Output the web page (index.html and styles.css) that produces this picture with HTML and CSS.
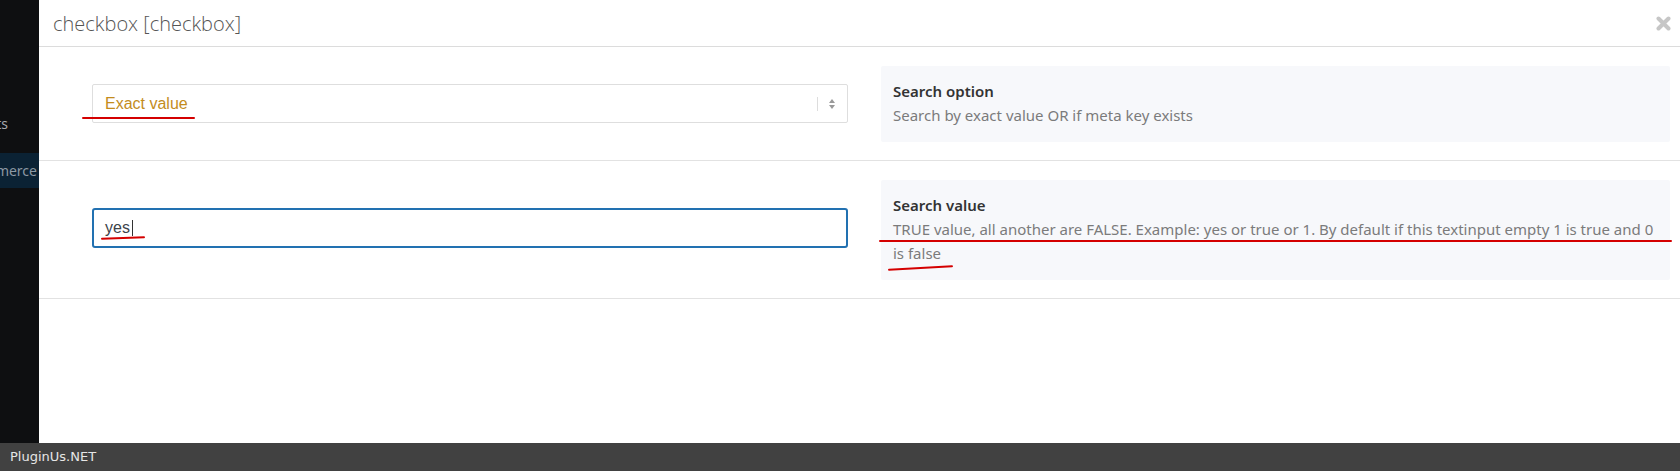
FILE: index.html
```html
<!DOCTYPE html>
<html lang="en">
<head>
    <meta charset="UTF-8">
    <title>checkbox [checkbox]</title>
    <link rel="stylesheet" href="styles.css">
</head>
<body>
    <div class="screen">
        <div class="sidebar">
            <div class="menu-item products"><span>Products</span></div>
            <div class="menu-item current"><span>WooCommerce</span></div>
        </div>

        <div class="modal">
            <div class="modal-header">
                <div class="modal-title">checkbox [checkbox]</div>
                <svg class="close" width="15" height="15" viewBox="0 0 15 15">
                    <path d="M2.5 2.5 L12.5 12.5 M12.5 2.5 L2.5 12.5" stroke="#c6c6c6" stroke-width="4" stroke-linecap="round"/>
                </svg>
            </div>

            <div class="row">
                <div class="field">
                    <div class="select">
                        <span class="select-value">Exact value</span>
                        <span class="select-sep"></span>
                        <svg class="select-arrows" width="6" height="10" viewBox="0 0 6 10">
                            <path d="M3 0 L6 4 L0 4 Z M0 6 L6 6 L3 10 Z" fill="#999"/>
                        </svg>
                    </div>
                    <span class="mark mark-select"></span>
                </div>
                <div class="desc">
                    <div class="desc-title">Search option</div>
                    <div class="desc-text">Search by exact value OR if meta key exists</div>
                </div>
            </div>

            <div class="row">
                <div class="field field-text">
                    <div class="text-input">yes<span class="caret"></span></div>
                    <span class="mark mark-yes"></span>
                </div>
                <div class="desc">
                    <div class="desc-title">Search value</div>
                    <div class="desc-text">TRUE value, all another are FALSE. Example: yes or true or 1. By default if this textinput empty 1 is true and 0 is false</div>
                    <span class="mark mark-line"></span>
                    <span class="mark mark-false"></span>
                </div>
            </div>
        </div>
    </div>

    <div class="footer">PluginUs.NET</div>
</body>
</html>
```

FILE: styles.css
```css
body {
    margin: 0;
    background-color: #fff;
    font-family: "Noto Sans", sans-serif;
    overflow: hidden;
}

.screen {
    display: flex;
    height: 443px;
}

.sidebar {
    width: 39px;
    flex-shrink: 0;
    background-color: #0e0f11;
    padding-top: 108px;
    box-sizing: border-box;
    overflow: hidden;
}

.menu-item {
    display: flex;
    justify-content: flex-end;
    align-items: center;
    height: 35px;
    white-space: nowrap;
    font-size: 14px;
    color: #a7aaad;
    overflow: hidden;
}

.menu-item.products {
    padding-right: 31px;
    height: 30px;
    margin-bottom: 15px;
}

.menu-item.current {
    background-color: #0b2234;
    color: #8c98a3;
    padding-right: 2px;
}

.modal {
    flex: 1;
    display: flex;
    flex-direction: column;
}

.modal-header {
    display: flex;
    align-items: center;
    justify-content: space-between;
    height: 46px;
    padding: 0 9px 0 14px;
    border-bottom: 1px solid #dcdcdc;
}

.modal-title {
    font-family: "Open Sans", sans-serif;
    font-weight: 300;
    font-size: 20px;
    color: #555;
}

.close {
    margin-top: 1px;
}

.row {
    display: flex;
    align-items: center;
    gap: 33px;
    padding: 19px 10px 18px 53px;
    border-bottom: 1px solid #e2e2e2;
}

.field {
    position: relative;
    width: 756px;
    flex-shrink: 0;
    margin-bottom: 1px;
}

.field-text {
    margin-bottom: 5px;
}

.select {
    display: flex;
    align-items: center;
    height: 39px;
    box-sizing: border-box;
    border: 1px solid #dedede;
    border-radius: 2px;
    padding: 0 12px 0 12px;
    font-family: "Liberation Sans", Arial, sans-serif;
    font-size: 16px;
}

.select-value {
    flex: 1;
    color: #c38c1c;
    padding-top: 1px;
}

.select-sep {
    width: 1px;
    height: 14px;
    background-color: #ddd;
    margin-right: 11px;
}

.text-input {
    display: flex;
    align-items: center;
    height: 40px;
    box-sizing: border-box;
    border: 2px solid #2271b1;
    border-radius: 3px;
    padding: 0 11px;
    font-family: "Liberation Sans", Arial, sans-serif;
    font-size: 16px;
    color: #3c434a;
}

.caret {
    display: inline-block;
    width: 1px;
    height: 16px;
    background-color: #333;
    margin-left: 2px;
    margin-top: 1px;
}

.desc {
    position: relative;
    flex: 1;
    background-color: #f7f8fb;
    border-radius: 2px;
    padding: 13px 12px 15px 12px;
    font-size: 15px;
    line-height: 24px;
}

.desc-title {
    font-weight: 600;
    color: #333;
}

.desc-text {
    color: #7b7b7b;
}

.mark {
    position: absolute;
    height: 2px;
    border-radius: 1px;
    background-color: #d40000;
}

.mark-select {
    left: -10px;
    top: 33px;
    width: 113px;
}

.mark-yes {
    left: 9px;
    top: 29px;
    width: 44px;
    transform: rotate(-2deg);
}

.mark-line {
    left: -2px;
    top: 60px;
    width: 793px;
}

.mark-false {
    left: 7px;
    top: 87px;
    width: 65px;
    transform: rotate(-3deg);
}

.footer {
    height: 28px;
    background-color: #414141;
    color: #e6e6e6;
    font-family: "DejaVu Sans", sans-serif;
    font-size: 13px;
    line-height: 28px;
    padding-left: 10px;
}
```
